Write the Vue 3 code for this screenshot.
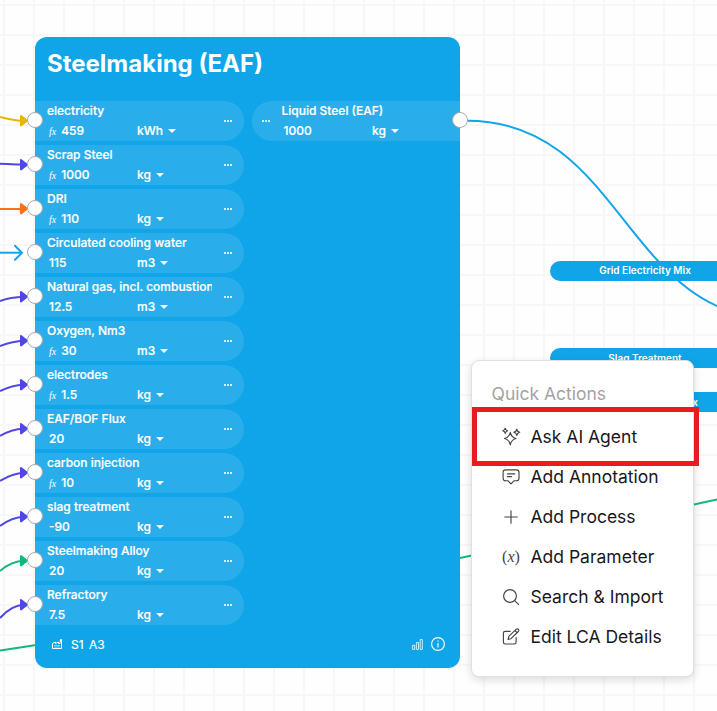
<script setup>
    import {reactive} from 'vue';
    const inputs = reactive([
        {name:'electricity',fx:true,value:'459',unit:'kWh',color:'#eab308',from:'M0 117C8 119 15 121 24 121'},
        {name:'Scrap Steel',fx:true,value:'1000',unit:'kg',color:'#4f46e5',from:'M0 163.7C8 164 15 164.5 24 164.5'},
        {name:'DRI',fx:true,value:'110',unit:'kg',color:'#f97316',from:'M0 209H24'},
        {name:'Circulated cooling water',value:'115',unit:'m3',color:'#0ea5e9',from:'M0 252.7H21',open:true},
        {name:'Natural gas, incl. combustion',value:'12.5',unit:'m3',color:'#4f46e5',from:'M0 301C8 298 15 297 24 296.7'},
        {name:'Oxygen, Nm3',fx:true,value:'30',unit:'m3',color:'#4f46e5',from:'M0 346C8 343 15 341 24 340.7'},
        {name:'electrodes',fx:true,value:'1.5',unit:'kg',color:'#4f46e5',from:'M0 391C8 387 15 385 24 384.7'},
        {name:'EAF/BOF Flux',value:'20',unit:'kg',color:'#4f46e5',from:'M0 436C8 431 15 429 24 428.7'},
        {name:'carbon injection',fx:true,value:'10',unit:'kg',color:'#4f46e5',from:'M0 481C8 476 15 473 24 472.7'},
        {name:'slag treatment',value:'-90',unit:'kg',color:'#4f46e5',from:'M0 526C8 520 15 517 24 516.7'},
        {name:'Steelmaking Alloy',value:'20',unit:'kg',color:'#10b981',from:'M0 571C8 564 15 561 24 560.7'},
        {name:'Refractory',value:'7.5',unit:'kg',color:'#4f46e5',from:'M0 618C8 609 15 605 24 604.7'},
    ]);
    const head=(item,i)=>{
        let y = 120.7+i*44;
        return item.open?`M15 ${y-7}L22 ${y}L15 ${y+7}`:`M21 ${y-4.7}L27 ${y}L21 ${y+4.7}Z`;
    }
    const actions = [
        {icon:'ai',text:'Ask AI Agent'},
        {icon:'note',text:'Add Annotation'},
        {icon:'plus',text:'Add Process'},
        {icon:'param',text:'Add Parameter'},
        {icon:'search',text:'Search & Import'},
        {icon:'edit',text:'Edit LCA Details'},
    ];
</script>

<template>
    <div class="canvas">
        <svg class="edges" width="717" height="711" fill="none" stroke-width="2">
            <path d="M0 650.5C150 630 330 580 460 558C550 540 630 518 717 499.5" stroke="#10b981"/>
            <path d="M467 120.7C624 120.7 624 319.5 781 319.5" stroke="#0ea5e9"/>
            <g v-for="(item,i) in inputs" :stroke="item.color">
                <path :d="item.from"/>
                <path :d="head(item,i)" :fill="item.open?'none':item.color" stroke-linejoin="round" stroke-linecap="round"/>
            </g>
        </svg>

        <div class="pill grid-mix">Grid Electricity Mix</div>
        <div class="pill slag">Slag Treatment</div>
        <div class="pill flux">Flux</div>

        <div class="card">
            <div class="title">Steelmaking (EAF)</div>
            <div class="flows">
                <div class="inputs">
                    <div v-for="item in inputs" class="row">
                        <i class="port"></i>
                        <div class="name">{{ item.name }}</div>
                        <div class="line">
                            <div class="value"><span v-if="item.fx" class="fx">fx</span>{{ item.value }}</div>
                            <div class="unit">{{ item.unit }}<i class="caret"></i></div>
                        </div>
                        <div class="more"><i></i><i></i><i></i></div>
                    </div>
                </div>
                <div class="row output">
                    <i class="port"></i>
                    <div class="name">Liquid Steel (EAF)</div>
                    <div class="line">
                        <div class="value">1000</div>
                        <div class="unit">kg<i class="caret"></i></div>
                    </div>
                    <div class="more"><i></i><i></i><i></i></div>
                </div>
            </div>
            <div class="foot">
                <svg class="factory" width="12" height="12" viewBox="0 0 12 12" fill="none" stroke="#fff">
                    <path d="M1.5 10.5V5.5L4.5 4V5.5L7.5 4V5.5H9L9.5 1.5H10.5V10.5Z"/>
                    <path d="M3 7.5H9M3 9H9" stroke-opacity=".5"/>
                </svg>
                <span>S1</span><span>A3</span>
                <svg class="bars" width="11" height="11" viewBox="0 0 11 11" fill="none" stroke="#fff" stroke-width=".8">
                    <path d="M.6 6.3H2.7V10.4H.6ZM4.4 3.5H6.5V10.4H4.4ZM8.2 .6H10.3V10.4H8.2Z"/>
                </svg>
                <svg width="14" height="14" viewBox="0 0 14 14" fill="none" stroke="#fff" stroke-width="1.1">
                    <circle cx="7" cy="7" r="6.4"/>
                    <path d="M7 6V10.4M7 3.5V4.8"/>
                </svg>
            </div>
        </div>

        <div class="menu">
            <div class="menu-title">Quick Actions</div>
            <div v-for="a in actions" class="action">
                <span v-if="a.icon==='param'" class="param">(<em>x</em>)</span>
                <svg v-else width="20" height="20" viewBox="0 0 20 20" fill="none" stroke="#444" stroke-width="1.15" stroke-linecap="round" stroke-linejoin="round">
                    <path v-if="a.icon==='ai'" d="M9.3 5.3Q10.2 10.2 15 11.5Q10.2 12.8 9.3 17.9Q8.4 12.8 3.4 11.5Q8.4 10.2 9.3 5.3ZM4.2 1.2Q4.5 3.3 6.6 3.8Q4.5 4.3 4.2 6.4Q3.9 4.3 1.7 3.8Q3.9 3.3 4.2 1.2ZM15.8 2.1Q16.2 4.8 18.7 5.3Q16.2 5.9 15.8 8.5Q15.4 5.9 12.8 5.3Q15.4 4.8 15.8 2.1Z"/>
                    <path v-if="a.icon==='note'" d="M4.6 2.8H15.5Q18 2.8 18 5.3V11.2Q18 13.7 15.5 13.7H13.2L10 16.9L6.8 13.7H4.6Q2.1 13.7 2.1 11.2V5.3Q2.1 2.8 4.6 2.8ZM6.4 6.9H13.7M6.4 9.6H10.6"/>
                    <path v-if="a.icon==='plus'" d="M10 3.8V16.2M3.8 10H16.2"/>
                    <path v-if="a.icon==='search'" d="M15.4 9A6.4 6.4 0 1 1 2.6 9A6.4 6.4 0 1 1 15.4 9ZM13.7 13.7L17.5 17.3"/>
                    <path v-if="a.icon==='edit'" d="M9.2 4.3H4.2Q2.4 4.3 2.4 6V15.3Q2.4 17 4.2 17H13.3Q15.1 17 15.1 15.3V10.6M7.1 12.5L7.8 9.4L15.3 2.2Q16.5 1.4 17.4 2.3Q18.3 3.2 17.3 4.5L10 11.7L7.1 12.5M14 3.5L16 5.6"/>
                </svg>
                <span>{{ a.text }}</span>
            </div>
        </div>
        <div class="marker"></div>
    </div>
</template>

<style>
    body{
        margin: 0;
        overflow: hidden;
    }
</style>

<style scoped>
    .canvas{
        position: relative;
        width: 717px;
        height: 711px;
        overflow: hidden;
        font-family: Inter, "Liberation Sans", sans-serif;
        background-color: #fefefe;
        background-image: linear-gradient(90deg,#f7f7f7 2px,transparent 2px),linear-gradient(#f7f7f7 2px,transparent 2px);
        background-size: 30px 30px;
        background-position: 3px 4px;
    }
    .edges{
        position: absolute;
        left: 0;
        top: 0;
    }
    .pill{
        position: absolute;
        left: 550px;
        box-sizing: border-box;
        width: 190px;
        height: 20px;
        border-radius: 10px;
        background-color: #10a5e9;
        color: #fff;
        font-size: 10px;
        font-weight: 600;
        line-height: 19px;
        text-align: center;
    }
    .grid-mix{
        top: 261px;
    }
    .slag{
        top: 348px;
        line-height: 21px;
    }
    .flux{
        top: 392px;
        padding-right: 42px;
        text-align: right;
        line-height: 21px;
    }
    .card{
        position: absolute;
        left: 35px;
        top: 37px;
        width: 425px;
        height: 631px;
        border-radius: 12px;
        background-color: #10a5e9;
        color: #fff;
    }
    .title{
        height: 63.7px;
        padding-left: 12px;
        font-size: 24px;
        font-weight: 700;
        line-height: 53px;
        box-sizing: border-box;
    }
    .flows{
        display: flex;
        gap: 8px;
    }
    .inputs{
        display: flex;
        flex-direction: column;
        gap: 4px;
    }
    .row{
        position: relative;
        box-sizing: border-box;
        width: 208.7px;
        height: 40px;
        padding-left: 12px;
        border-radius: 0 20px 20px 0;
        background-color: #29aeeb;
        font-size: 12px;
        font-weight: 500;
        line-height: 20px;
        -webkit-text-stroke: .2px #fff;
    }
    .output{
        width: 208.3px;
        padding-left: 29.8px;
        border-radius: 20px 0 0 20px;
    }
    .name{
        width: 165px;
        overflow: hidden;
        white-space: nowrap;
    }
    .line{
        display: flex;
        padding-left: 2px;
    }
    .value{
        width: 88px;
    }
    .output .value{
        width: 88.6px;
    }
    .fx{
        margin-right: 5px;
        font: italic 10px "Liberation Serif", serif;
        -webkit-text-stroke: 0;
    }
    .unit{
        display: flex;
        align-items: center;
        gap: 5px;
    }
    .caret{
        border: 4px solid transparent;
        border-top-color: #fff;
        border-bottom: 0;
    }
    .more{
        position: absolute;
        left: 189px;
        top: 19.3px;
        display: flex;
        gap: 1px;
    }
    .more i{
        width: 2px;
        height: 2px;
        background-color: #d8f0fc;
    }
    .output .more{
        left: 10px;
    }
    .port{
        position: absolute;
        left: -8px;
        top: 11.6px;
        box-sizing: border-box;
        width: 16px;
        height: 16px;
        border: 1px solid #aaa;
        border-radius: 50%;
        background-color: #fff;
    }
    .output .port{
        left: auto;
        right: -8px;
    }
    .foot{
        display: flex;
        align-items: center;
        height: 39.5px;
        padding: 0 15px 0 16px;
        font-size: 12px;
        -webkit-text-stroke: .15px #fff;
    }
    .foot span{
        margin-right: 5.5px;
    }
    .factory{
        margin-right: 8px;
    }
    .bars{
        margin: 0 8px 0 auto;
    }
    .menu{
        position: absolute;
        left: 471px;
        top: 360px;
        box-sizing: border-box;
        width: 223px;
        height: 317px;
        padding: 16px 0 0 19.5px;
        border: 1px solid #e0e0e0;
        border-radius: 8px;
        background-color: #fff;
        box-shadow: 0 3px 8px rgba(0,0,0,.14);
        color: #18181b;
        font-size: 17.5px;
    }
    .menu-title{
        height: 40px;
        line-height: 34px;
        color: #a3a3a3;
    }
    .action{
        display: flex;
        align-items: center;
        gap: 9.5px;
        height: 40px;
        padding-left: 9.5px;
        line-height: 40px;
        white-space: nowrap;
    }
    .param{
        width: 20px;
        text-align: center;
        font: 16px "Liberation Serif", serif;
        color: #444;
    }
    .marker{
        position: absolute;
        left: 472px;
        top: 407px;
        box-sizing: border-box;
        width: 227px;
        height: 59px;
        border: 5px solid #e81c20;
    }
</style>
